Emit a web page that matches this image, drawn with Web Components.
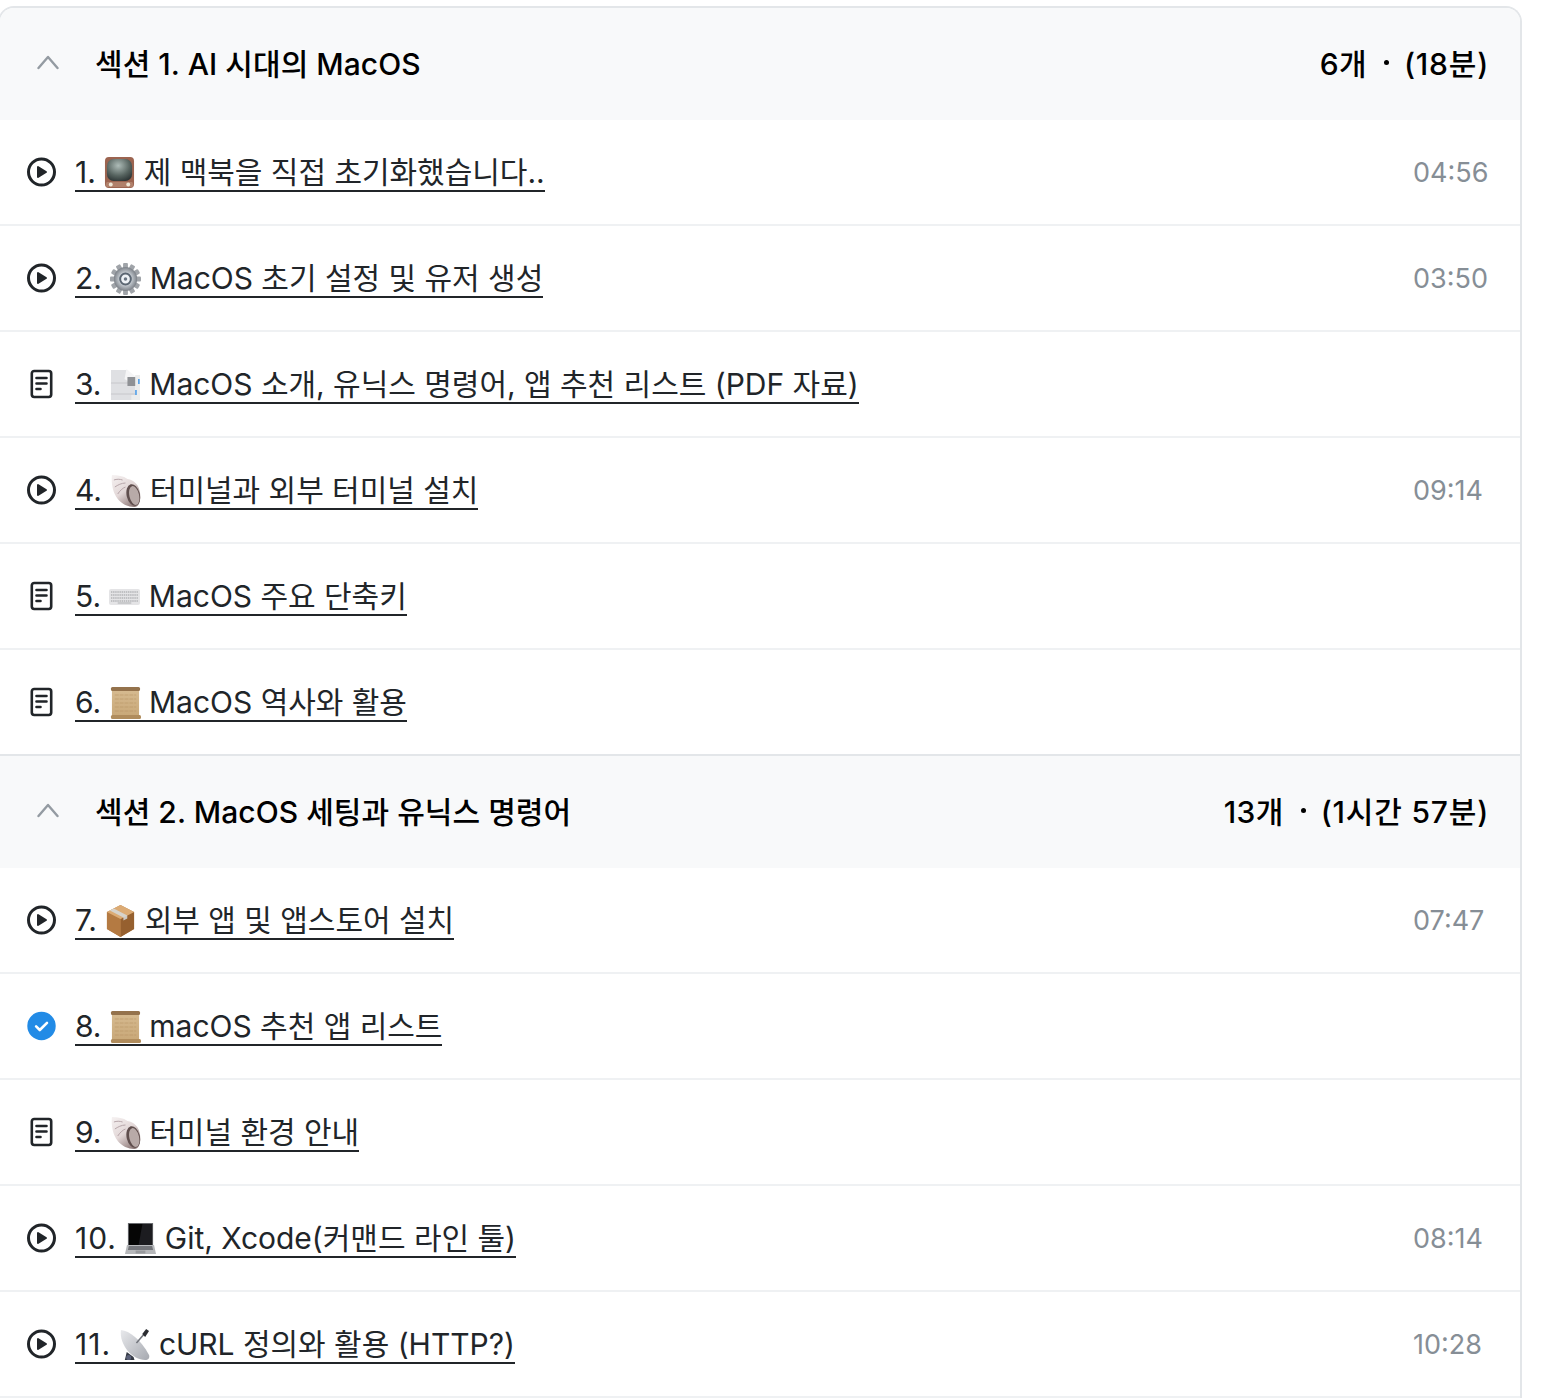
<!DOCTYPE html>
<html lang="ko">
<head>
<meta charset="utf-8">
<style>
  html, body { margin: 0; background: #fff; overflow: hidden; }
  body { font-family: Inter, "Noto Sans CJK KR", sans-serif; color: #212529; }
</style>
</head>
<body>
<course-list>
  <course-section count="6개" length="(18분)">섹션 1. AI 시대의 MacOS</course-section>
  <course-lesson kind="video" time="04:56">1. <emoji-icon name="tv"></emoji-icon> 제 맥북을 직접 초기화했습니다..</course-lesson>
  <course-lesson kind="video" time="03:50">2. <emoji-icon name="gear"></emoji-icon> MacOS 초기 설정 및 유저 생성</course-lesson>
  <course-lesson kind="doc">3. <emoji-icon name="cabinet"></emoji-icon> MacOS 소개, 유닉스 명령어, 앱 추천 리스트 (PDF 자료)</course-lesson>
  <course-lesson kind="video" time="09:14">4. <emoji-icon name="shell"></emoji-icon> 터미널과 외부 터미널 설치</course-lesson>
  <course-lesson kind="doc">5. <emoji-icon name="keyboard"></emoji-icon> MacOS 주요 단축키</course-lesson>
  <course-lesson kind="doc">6. <emoji-icon name="scroll"></emoji-icon> MacOS 역사와 활용</course-lesson>
  <course-section count="13개" length="(1시간 57분)">섹션 2. MacOS 세팅과 유닉스 명령어</course-section>
  <course-lesson kind="video" time="07:47">7. <emoji-icon name="box"></emoji-icon> 외부 앱 및 앱스토어 설치</course-lesson>
  <course-lesson kind="done">8. <emoji-icon name="scroll"></emoji-icon> macOS 추천 앱 리스트</course-lesson>
  <course-lesson kind="doc">9. <emoji-icon name="shell"></emoji-icon> 터미널 환경 안내</course-lesson>
  <course-lesson kind="video" time="08:14"><span style="letter-spacing:1px">10.</span> <emoji-icon name="laptop"></emoji-icon> Git, Xcode(커맨드 라인 툴)</course-lesson>
  <course-lesson kind="video" time="10:28"><span style="letter-spacing:1px">11.</span> <emoji-icon name="dish"></emoji-icon> cURL 정의와 활용 (HTTP?)</course-lesson>
</course-list>

<script>
  const ICONS = {
    video: `<svg width="32" height="32" viewBox="0 0 32 32"><circle cx="15.500" cy="16" r="13" fill="none" stroke="#212529" stroke-width="3"/><path d="M12 11v10l8-5z" fill="#212529" stroke="#212529" stroke-width="2" stroke-linejoin="round"/></svg>`,
    doc: `<svg width="32" height="32" viewBox="0 0 32 32" fill="none" stroke="#212529" stroke-width="2.600" stroke-linecap="round" stroke-linejoin="round"><rect x="5.800" y="3" width="19.400" height="26" rx="2.400"/><path d="M10.500 10h10M10.500 15.500h10M10.500 21h4"/></svg>`,
    done: `<svg width="32" height="32" viewBox="0 0 32 32"><circle cx="15.500" cy="16" r="14.200" fill="#228be6"/><path d="M10.100 16.400l3.700 3.600 7.200-7.200" fill="none" stroke="#fff" stroke-width="2.600" stroke-linecap="round" stroke-linejoin="round"/></svg>`
  };

  const EMOJI = {
    tv: `<defs><radialGradient id="s" cx=".45" cy=".3" r=".85"><stop offset="0" stop-color="#aebcb8"/><stop offset=".55" stop-color="#56635f"/><stop offset="1" stop-color="#1d2426"/></radialGradient></defs>
      <rect x="1" y="0" width="30" height="31" rx="4" fill="#9c6450"/><rect x="3" y="2" width="26" height="22" rx="7" fill="url(#s)"/>
      <rect x="2" y="25" width="28" height="5" rx="1.500" fill="#b0806a"/><circle cx="7" cy="27.500" r="2" fill="#efe6d6"/><circle cx="25" cy="27.500" r="2" fill="#efe6d6"/>`,
    gear: `<defs><radialGradient id="g"><stop offset="0" stop-color="#f4f7fa"/><stop offset=".35" stop-color="#7d8a98"/><stop offset=".55" stop-color="#c0c6cc"/><stop offset="1" stop-color="#7c8188"/></radialGradient></defs>
      <g fill="#a0a4a9"><rect x="13.500" y="0" width="5" height="32" rx="1"/><rect x="13.500" y="0" width="5" height="32" rx="1" transform="rotate(30 16 16)"/><rect x="13.500" y="0" width="5" height="32" rx="1" transform="rotate(60 16 16)"/><rect x="13.500" y="0" width="5" height="32" rx="1" transform="rotate(90 16 16)"/><rect x="13.500" y="0" width="5" height="32" rx="1" transform="rotate(120 16 16)"/><rect x="13.500" y="0" width="5" height="32" rx="1" transform="rotate(150 16 16)"/></g>
      <circle cx="16" cy="16" r="12" fill="url(#g)"/><circle cx="16" cy="16" r="5.500" fill="#eef2f6" stroke="#5b6672" stroke-width="2"/><circle cx="16" cy="16" r="1.800" fill="#6a7582"/>`,
    cabinet: `<path d="M1 1h17l8 9v21H1z" fill="#dfe0e3"/><path d="M17 0l10 8-4 7-8-5z" fill="#f5f5f6"/><path d="M1 14h25M1 25h25" stroke="#c6c7ca"/><path d="M18 8h10v9H18z" fill="#8f9195"/><path d="M26 6h5v25h-9v-5h4z" fill="#eceded"/><rect x="29" y="10" width="1.600" height="5" fill="#4a9be8"/><rect x="26" y="21" width="1.600" height="5" fill="#4a9be8"/>`,
    shell: `<defs><linearGradient id="a" x1="0" y1="0" x2=".7" y2="1"><stop offset="0" stop-color="#f6f2f2"/><stop offset=".55" stop-color="#e2d7d7"/><stop offset="1" stop-color="#8f7b7a"/></linearGradient></defs>
      <path d="M2 0c6 0 12 1 16 4 7 1 12 6 13 14 1 8-1 14-6 14-6 0-13-3-17-8C3 18 1 8 2 0z" fill="url(#a)"/><ellipse cx="24" cy="20" rx="6.800" ry="11" fill="#5f4e4d" transform="rotate(-14 24 20)"/><ellipse cx="25" cy="20.500" rx="5" ry="9.600" fill="#b8aaa8" transform="rotate(-14 25 20.500)"/><path d="M4 5c3-1 6-1 9 0M5 12c3-2 7-4 11-4M8 19c2-3 5-6 8-7" stroke="#b5a4a8" fill="none"/>`,
    keyboard: `<rect x="0" y="8" width="32" height="16" rx="2" fill="#e4e4e6"/><path d="M2 11h28M2 14h28M2 17h28M2 20h28" stroke="#b3b4b7" stroke-width="1.400" stroke-dasharray="1.500 .7"/><rect x="9" y="21" width="14" height="2" fill="#c9cacc"/>`,
    scroll: `<defs><linearGradient id="p" x1="0" y1="0" x2="0" y2="1"><stop offset="0" stop-color="#d6ba90"/><stop offset="1" stop-color="#c9a878"/></linearGradient></defs>
      <rect x="2" y="3" width="28" height="26" fill="url(#p)"/><path d="M5 8h22M5 12h22M5 16h22M5 20h22M5 24h22" stroke="#b3905f" stroke-opacity=".5" stroke-dasharray="4 1"/><rect x="1" y="0" width="30" height="4" rx="1.500" fill="#94724c"/><rect x="1" y="28" width="31" height="4" rx="1.500" fill="#b08c5c"/>`,
    box: `<path d="M16 0l14 7v17l-14 8-14-8V7z" fill="#b9814a"/><path d="M16 14l14-7v17l-14 8z" fill="#96602f"/><path d="M2 7l14 7v18L2 24z" fill="#b47a42"/><path d="M16 0l14 7-14 7L2 7z" fill="#dcab74"/><path d="M9 3.500l14 7v3l-4 2v-3L5 5.500z" fill="#d5d9dc" opacity=".85"/>`,
    laptop: `<path d="M3 0h26v23H3z" fill="#6a6c70"/><path d="M4 1h24v21H4z" fill="#050505"/><path d="M18 1h10v21H14z" fill="#1c1c20"/><path d="M2 22h28l2 9H0z" fill="#b6b8bb"/><path d="M4 23h24l1 4H3z" fill="#73757a"/><rect x="11" y="27.500" width="10" height="3" fill="#97999d"/>`,
    dish: `<defs><linearGradient id="d" x1="0" y1="0" x2="1" y2="1"><stop offset="0" stop-color="#e8e9ec"/><stop offset="1" stop-color="#a6a9b0"/></linearGradient></defs>
      <path d="M2 1c9 1 20 9 29 25 1 3-1 5-4 5C14 31 0 16 2 1z" fill="url(#d)"/><path d="M18 14L26 5" stroke="#70737a" stroke-width="1.600"/><path d="M24 5l4-5 3 2-4 6z" fill="#2a2c30"/><path d="M6 31l2-8 7 5 1 3z" fill="#353a44"/><circle cx="10" cy="28.500" r="2.600" fill="#5a6078"/>`
  };

  class CourseList extends HTMLElement {
    connectedCallback() {
      this.attachShadow({mode: 'open'}).innerHTML = `
        <style>
          :host { display: block; width: 1524px; margin: 6px 0 0 -2px; box-sizing: border-box; border: 2px solid #e3e6e9; border-bottom: 0; border-radius: 16px 16px 0 0; overflow: hidden; background: #fff; }
        </style>
        <slot></slot>`;
    }
  }

  class CourseSection extends HTMLElement {
    connectedCallback() {
      const count = this.getAttribute('count');
      const length = this.getAttribute('length');
      this.attachShadow({mode: 'open'}).innerHTML = `
        <style>
          :host { display: flex; align-items: center; height: 112px; box-sizing: border-box; padding: 0 31px 4px 37px; background: #f8f9fa; color: #000; font-size: 30px; font-weight: 500; letter-spacing: .05px; }
          :host(:not(:first-child)) { box-shadow: 0 -2px 0 #e3e6e9; }
          svg { flex: none; margin-right: 37px; }
          .title { flex: 1; margin-left: -1px; }
          .meta { display: flex; align-items: center; letter-spacing: .4px; }
          .dot { width: 5px; height: 5px; margin: 0 15px 0 17px; border-radius: 50%; background: #000; }
          .length { letter-spacing: .8px; }
        </style>
        <svg width="22" height="16" viewBox="0 0 22 16" fill="none" stroke="#949ba2" stroke-width="2.400" stroke-linecap="round" stroke-linejoin="round"><path d="M1.500 14L11 3l9.500 11"/></svg>
        <span class="title"><slot></slot></span>
        <span class="meta"><span>${count}</span><span class="dot"></span><span class="length">${length}</span></span>`;
    }
  }

  class CourseLesson extends HTMLElement {
    connectedCallback() {
      const kind = this.getAttribute('kind');
      const time = this.getAttribute('time') || '';
      this.attachShadow({mode: 'open'}).innerHTML = `
        <style>
          :host { display: flex; align-items: center; height: 106px; box-sizing: border-box; padding: 0 33px 0 26px; border-bottom: 2px solid #eff1f3; font-size: 30px; color: #212529; }
          .icon { flex: none; display: flex; width: 32px; height: 32px; margin-right: 17px; }
          .title { flex: 1; padding-top: 2px; }
          .title span { display: inline-block; line-height: 36px; border-bottom: 2px solid #212529; white-space: nowrap; letter-spacing: -.02px; }
          .time { flex: none; width: 74px; font-size: 27px; color: #868e96; }
        </style>
        <span class="icon">${ICONS[kind]}</span>
        <span class="title"><span><slot></slot></span></span>
        <span class="time">${time}</span>`;
    }
  }

  class EmojiIcon extends HTMLElement {
    connectedCallback() {
      this.attachShadow({mode: 'open'}).innerHTML = `
        <style>
          :host { display: inline-block; width: 31px; height: 32px; vertical-align: -6px; }
          svg { display: block; }
        </style>
        <svg width="31" height="32" viewBox="0 0 32 32" preserveAspectRatio="none">${EMOJI[this.getAttribute('name')]}</svg>`;
    }
  }

  customElements.define('course-list', CourseList);
  customElements.define('course-section', CourseSection);
  customElements.define('course-lesson', CourseLesson);
  customElements.define('emoji-icon', EmojiIcon);
</script>
</body>
</html>
